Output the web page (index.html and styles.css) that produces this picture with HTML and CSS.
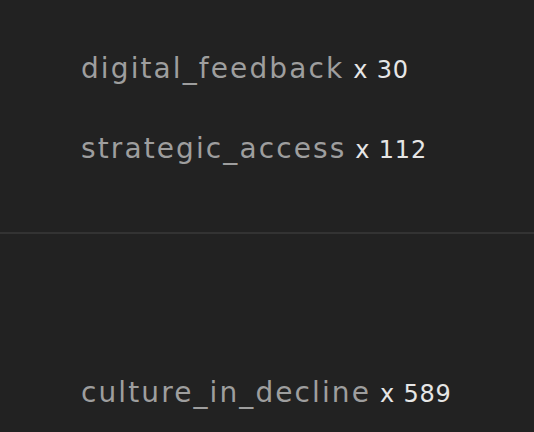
FILE: index.html
```html
<!DOCTYPE html>
<html lang="en">
<head>
  <meta charset="UTF-8" />
  <meta name="viewport" content="width=device-width, initial-scale=1.0" />
  <title>Tag counts</title>
  <link rel="stylesheet" href="styles.css">
</head>
<body>
  <div class="group">
    <div class="tag"><span class="name">digital_feedback</span><span class="count">x 30</span></div>
    <div class="tag"><span class="name">strategic_access</span><span class="count">x 112</span></div>
  </div>

  <div class="group group-low">
    <div class="tag"><span class="name">culture_in_decline</span><span class="count">x 589</span></div>
  </div>
</body>
</html>
```

FILE: styles.css
```css
body {
  font-family: "DejaVu Sans", sans-serif;
  margin: 0;
  padding: 0;
  background-color: #222222;
  overflow: hidden;
}
.group {
  padding: 52px 0 20px;
  border-bottom: 2px solid #333333;
}
.group-low {
  border-bottom: none;
  padding: 142px 0 0;
}
.group-low .tag {
  height: 50px;
}
.tag {
  height: 80px;
  padding-left: 81px;
  display: flex;
  align-items: baseline;
  white-space: nowrap;
}
.name {
  font-size: 28px;
  color: #9e9e9e;
  letter-spacing: 2.1px;
}
.count {
  font-size: 24px;
  color: #e6e6e6;
  letter-spacing: 0.8px;
  margin-left: 9px;
}
```
